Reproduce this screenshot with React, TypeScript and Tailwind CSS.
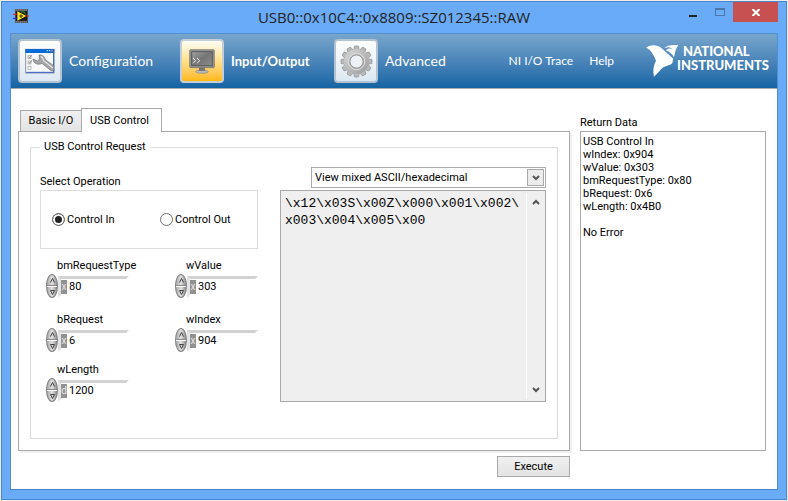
import { useState } from "react"
import type { ReactNode } from "react"

function AppIcon() {
  return (
    <svg width="16" height="14" viewBox="0 0 48 42" aria-hidden="true">
      <rect x="6" y="0" width="39" height="42" fill="#4a4a4a" />
      <path d="M8 3h35M8 39h35" stroke="#c9c9c9" strokeWidth="3" strokeDasharray="3 3" />
      <rect x="9" y="7" width="33" height="28" fill="#161616" />
      <path d="M13 7v28L40 21z" fill="#ffe81a" />
      <path d="M24 16v11M19 21h11" stroke="#222" strokeWidth="3" />
      <path d="M24 9h9l6 8" stroke="#159a2b" strokeWidth="3" fill="none" />
      <path d="M0 16h13M36 21h12" stroke="#f01818" strokeWidth="3" />
      <path d="M0 28h13" stroke="#2020e8" strokeWidth="3" />
    </svg>
  )
}

function ConfigIcon() {
  return (
    <svg width="30" height="26" viewBox="0 0 90 78" aria-hidden="true">
      <rect x="2" y="4" width="85" height="71" fill="#f7f9fb" stroke="#8b96a8" strokeWidth="3" />
      <path d="M1 3h87v12H1z" fill="#0a6bd6" />
      <path d="M65 8h4M72 8h4" stroke="#b9dcff" strokeWidth="4" />
      <path d="M79 8h5" stroke="#f07050" strokeWidth="5" />
      <path d="M86 15v58H4" stroke="#2f5bc4" strokeWidth="3" fill="none" />
      <g fill="#fff" stroke="#9a9a9a" strokeWidth="2">
        <rect x="9" y="23" width="9" height="9" />
        <rect x="9" y="39" width="9" height="9" />
        <rect x="9" y="55" width="9" height="9" />
      </g>
      <path d="M11 26l3 4 6-9M11 42l3 4 6-9" stroke="#666" strokeWidth="2" fill="none" />
      <path
        d="M24 33l13 6 7-6-2-12c10-1 18 5 19 14l25 18v16l-8-1-27-22c-12 6-26 1-27-13z"
        fill="#a6a6a6"
        stroke="#6d6d6d"
        strokeWidth="2"
      />
      <path d="M47 25c7 2 8 8 9 13l28 22" stroke="#e2e2e2" strokeWidth="4" fill="none" />
    </svg>
  )
}

function MonitorIcon() {
  return (
    <svg width="26" height="25" viewBox="0 0 78 75" aria-hidden="true">
      <defs>
        <linearGradient id="screen" x1="0" y1="0" x2="1" y2="1">
          <stop offset="0" stopColor="#a3a3a3" />
          <stop offset="0.5" stopColor="#747474" />
          <stop offset="1" stopColor="#8d8d8d" />
        </linearGradient>
      </defs>
      <ellipse cx="39" cy="68" rx="19" ry="5" fill="#b9b9b9" stroke="#888" strokeWidth="2" />
      <path d="M31 54h16l2 12H29z" fill="#777" />
      <rect x="2" y="2" width="74" height="54" rx="3" fill="#969696" stroke="#6a6a6a" strokeWidth="2" />
      <rect x="8" y="8" width="62" height="42" fill="url(#screen)" stroke="#5a5a5a" strokeWidth="3" />
      <path d="M12 27l8 8-8 8M24 27l8 8-8 8" stroke="#f2f2f2" strokeWidth="3" fill="none" />
      <circle cx="61" cy="52" r="2" fill="#38c938" />
    </svg>
  )
}

const teeth = [0, 30, 60, 90, 120, 150, 180, 210, 240, 270, 300, 330]

function GearIcon() {
  return (
    <svg width="33" height="33" viewBox="-50 -50 100 100" aria-hidden="true">
      <defs>
        <linearGradient id="gear" x1="0" y1="0" x2="1" y2="1">
          <stop offset="0" stopColor="#d2d2d2" />
          <stop offset="1" stopColor="#a3a3a3" />
        </linearGradient>
      </defs>
      {teeth.map((angle) => (
        <path
          key={angle}
          d="M-9 -32L-6 -47H6L9 -32z"
          transform={`rotate(${angle})`}
          fill="#b9b9b9"
          stroke="#8f8f8f"
          strokeWidth="2"
        />
      ))}
      <circle r="29" fill="none" stroke="url(#gear)" strokeWidth="17" />
      <circle r="20" fill="#eef2f6" stroke="#8d8d8d" strokeWidth="3" />
      <circle r="25" fill="none" stroke="#dedede" strokeWidth="3" />
    </svg>
  )
}

function EagleLogo() {
  return (
    <svg width="33" height="34" viewBox="0 0 99 102" fill="#fff" aria-hidden="true">
      <path d="M0 11C14 1 34 1 46 12L82 44L79 57C74 64 62 64 52 70C42 78 36 88 24 98C20 82 22 64 30 50C22 30 14 16 0 11z" />
      <path d="M55 13C62 4 74 2 97 3C89 12 88 24 84 40C79 30 71 24 60 19C66 13 72 12 79 15C72 8 64 9 55 13z" />
    </svg>
  )
}

interface NavItemProps {
  label: string
  icon: ReactNode
  active?: boolean
  onClick: () => void
}

function NavItem({ label, icon, active, onClick }: NavItemProps) {
  return (
    <button type="button" onClick={onClick} className="flex items-center gap-[7px] text-white">
      <span
        className={
          active
            ? "flex size-11 items-center justify-center rounded border-2 border-[#c5ced6] bg-linear-to-b from-[#fffdf5] via-[#ffe08a] to-[#ffb800]"
            : "flex size-11 items-center justify-center rounded border-2 border-[#b4c3d2] bg-linear-to-b from-white to-[#dce8f3]"
        }
      >
        {icon}
      </span>
      <span className={active ? "text-[13px] font-bold" : "text-sm"}>{label}</span>
    </button>
  )
}

interface NumericProps {
  id: string
  radix: "x" | "d"
  initial: string
}

function NumericControl({ id, radix, initial }: NumericProps) {
  const [value, setValue] = useState(initial)
  const base = radix === "x" ? 16 : 10

  const step = (delta: number) => {
    const next = Math.max(0, (parseInt(value, base) || 0) + delta)
    setValue(next.toString(base).toUpperCase())
  }

  return (
    <div>
      <label htmlFor={id} className="block pl-[11px]">
        {id}
      </label>
      <div className="flex h-[26px] items-start">
        <div className="flex h-6 w-3 flex-col overflow-hidden rounded-[50%] border border-[#7f7f7f] bg-linear-to-r from-[#a8a8a8] via-[#e2e2e2] to-[#8c8c8c]">
          <button type="button" aria-label={`Increase ${id}`} onClick={() => step(1)} className="flex flex-1 items-center justify-center border-b border-[#8b8b8b]">
            <svg width="5" height="5" viewBox="0 0 5 5"><path d="M0.5 4.5L2.5 0.5L4.5 4.5" fill="none" stroke="#444" /></svg>
          </button>
          <button type="button" aria-label={`Decrease ${id}`} onClick={() => step(-1)} className="flex flex-1 items-center justify-center border-t border-white">
            <svg width="5" height="5" viewBox="0 0 5 5"><path d="M0.5 0.5L2.5 4.5L4.5 0.5z" fill="none" stroke="#444" /></svg>
          </button>
        </div>
        <div className="mt-0.5 flex h-[22px] w-[71px] items-center border-3 border-t-[#d2d2d2] border-r-transparent border-b-transparent border-l-[#e3e3e3]">
          <span className="flex h-3.5 w-1.5 shrink-0 items-center justify-center bg-[#919191] text-[10px] text-[#e8e8e8]">{radix}</span>
          <input
            id={id}
            value={value}
            onChange={(e) => setValue(e.target.value)}
            className="w-full min-w-0 bg-transparent pl-0.5 outline-none"
          />
        </div>
      </div>
    </div>
  )
}

function Chevron({ down }: { down?: boolean }) {
  return (
    <svg width="8" height="6" viewBox="0 0 8 6" aria-hidden="true">
      <path d={down ? "M1 1L4 4L7 1" : "M1 5L4 2L7 5"} fill="none" stroke="#555" strokeWidth="2" />
    </svg>
  )
}

const returnData = `USB Control In
wIndex: 0x904
wValue: 0x303
bmRequestType: 0x80
bRequest: 0x6
wLength: 0x4B0

No Error`

const buffer = "\\x12\\x03S\\x00Z\\x000\\x001\\x002\\\nx003\\x004\\x005\\x00"

export default function App() {
  const [page, setPage] = useState("io")
  const [tab, setTab] = useState("control")
  const [operation, setOperation] = useState("in")

  return (
    <div className="flex min-h-screen bg-[#ececec] p-px font-[Roboto,sans-serif] text-[11px] leading-4 text-black">
      <div className="flex flex-1 flex-col border border-[#4a86cb] bg-[#6aabf8] px-2 pb-[9px]">
        <header className="grid h-[31px] grid-cols-[1fr_auto_1fr] items-start">
          <div className="pt-[7px] pl-[3px]">
            <AppIcon />
          </div>
          <h1 className="pt-[3px] font-['Open_Sans',sans-serif] text-[15px] leading-6 text-[#222]">
            USB0::0x10C4::0x8809::SZ012345::RAW
          </h1>
          <div className="flex justify-end">
            <button type="button" aria-label="Minimize" className="flex h-5 w-[26px] items-center justify-center pt-2">
              <span className="h-0.5 w-2 bg-[#222]" />
            </button>
            <button type="button" aria-label="Maximize" className="flex h-5 w-[27px] items-center justify-center">
              <span className="h-2 w-2.5 border border-t-2 border-[#4d76a8]" />
            </button>
            <button type="button" aria-label="Close" className="flex h-5 w-[45px] items-center justify-center bg-[#c75050]">
              <svg width="8" height="7" viewBox="0 0 8 7"><path d="M0.5 0L7.5 7M7.5 0L0.5 7" stroke="#fff" strokeWidth="2" /></svg>
            </button>
          </div>
        </header>

        <div className="flex flex-1 flex-col border border-[#4f8fd2] border-b-[#4a86cb] bg-white">
          <nav className="flex h-[55px] shrink-0 items-center justify-between border-b border-[#a9a9a9] bg-linear-to-b from-[#78a6cc] to-[#1164a5] pr-2 pl-[7px] font-[Lato,sans-serif] text-white">
            <div className="grid grid-cols-[162px_154px_auto]">
              <NavItem label="Configuration" icon={<ConfigIcon />} active={page === "config"} onClick={() => setPage("config")} />
              <NavItem label="Input/Output" icon={<MonitorIcon />} active={page === "io"} onClick={() => setPage("io")} />
              <NavItem label="Advanced" icon={<GearIcon />} active={page === "advanced"} onClick={() => setPage("advanced")} />
            </div>
            <div className="flex items-center text-xs">
              <a href="#trace" className="mr-4">NI I/O Trace</a>
              <a href="#help" className="mr-8">Help</a>
              <div className="flex">
                <EagleLogo />
                <div className="-ml-0.5 text-[13px] leading-[14px] font-black">
                  <p className="pl-1.5">NATIONAL</p>
                  <p>INSTRUMENTS</p>
                </div>
              </div>
            </div>
          </nav>

          <main className="grid flex-1 grid-cols-[1fr_186px] grid-rows-[auto_1fr_auto] gap-x-2.5 pt-[19px] pr-[11px] pb-3 pl-[7px]">
            <div role="tablist" className="relative z-10 -mb-px flex items-end pl-0.5">
              <button
                type="button"
                role="tab"
                aria-selected={tab === "basic"}
                onClick={() => setTab("basic")}
                className={
                  tab === "basic"
                    ? "h-6 w-[61px] border border-b-0 border-[#a9a9a9] bg-white"
                    : "mb-px h-[21px] w-[61px] border border-r-0 border-b-0 border-[#a9a9a9] bg-linear-to-b from-[#f0f0f0] to-[#e4e4e4]"
                }
              >
                Basic I/O
              </button>
              <button
                type="button"
                role="tab"
                aria-selected={tab === "control"}
                onClick={() => setTab("control")}
                className={
                  tab === "control"
                    ? "h-6 w-[81px] border border-b-0 border-[#a9a9a9] bg-white pr-1"
                    : "mb-px h-[21px] w-[81px] border border-b-0 border-[#a9a9a9] bg-linear-to-b from-[#f0f0f0] to-[#e4e4e4]"
                }
              >
                USB Control
              </button>
            </div>
            <label htmlFor="return-data" className="self-end">
              Return Data
            </label>

            <section className="flex border border-[#a9a9a9] px-[11px] pt-[7px] pb-[11px] shadow-[2px_2px_0_#f0f0f0]">
              <fieldset className="min-w-0 flex-1 border border-[#dcdcdc] pr-[11px] pl-[9px]">
                <legend className="px-1">USB Control Request</legend>
                <div className="flex gap-[22px] pt-3">
                  <div className="w-[218px] shrink-0 pt-[7px]">
                    <p id="operation">Select Operation</p>
                    <div role="radiogroup" aria-labelledby="operation" className="grid h-[59px] grid-cols-[108px_auto] items-center border border-[#dcdcdc] pl-[11px]">
                      {["in", "out"].map((value) => (
                        <label key={value} className="flex items-center gap-0.5">
                          <input
                            type="radio"
                            name="operation"
                            value={value}
                            checked={operation === value}
                            onChange={() => setOperation(value)}
                            className="size-[13px] appearance-none rounded-full border border-[#707070] bg-white checked:bg-[#222] checked:shadow-[inset_0_0_0_2px_#fff]"
                          />
                          {value === "in" ? "Control In" : "Control Out"}
                        </label>
                      ))}
                    </div>
                    <div className="mt-[9px] pl-1.5">
                      <div className="grid grid-cols-[129px_auto] gap-y-3">
                        <NumericControl id="bmRequestType" radix="x" initial="80" />
                        <NumericControl id="wValue" radix="x" initial="303" />
                        <NumericControl id="bRequest" radix="x" initial="6" />
                        <NumericControl id="wIndex" radix="x" initial="904" />
                      </div>
                      <div className="mt-2">
                        <NumericControl id="wLength" radix="d" initial="1200" />
                      </div>
                    </div>
                  </div>

                  <div className="flex min-w-0 flex-1 flex-col items-end gap-0.5">
                    <div className="relative w-[235px]">
                      <select aria-label="View" className="block h-[21px] w-full appearance-none border border-[#a9a9a9] bg-white px-[3px] outline-none">
                        <option>View mixed ASCII/hexadecimal</option>
                        <option>View ASCII only</option>
                        <option>View hexadecimal only</option>
                      </select>
                      <span className="pointer-events-none absolute inset-y-0.5 right-0.5 flex w-[17px] items-center justify-center border border-[#a9a9a9] bg-[#ececec]">
                        <Chevron down />
                      </span>
                    </div>
                    <div className="flex h-[212px] w-full border border-[#a9a9a9] bg-[#efefef]">
                      <textarea
                        aria-label="Buffer"
                        readOnly
                        value={buffer}
                        className="min-w-0 flex-1 resize-none overflow-hidden py-1 pl-1 font-['Liberation_Mono',monospace] text-[13px] leading-[17px] outline-none"
                      />
                      <div className="my-0.5 flex w-[19px] flex-col items-center justify-between border-l border-white py-1.5">
                        <button type="button" aria-label="Scroll up"><Chevron /></button>
                        <button type="button" aria-label="Scroll down"><Chevron down /></button>
                      </div>
                    </div>
                  </div>
                </div>
              </fieldset>
            </section>
            <textarea
              id="return-data"
              readOnly
              value={returnData}
              className="resize-none border border-[#a9a9a9] px-0.5 py-[3px] leading-[13px] outline-none"
            />

            <button type="button" className="mt-[5px] h-[21px] w-[73px] justify-self-end border border-[#a9a9a9] bg-linear-to-b from-[#f0f0f0] to-[#e3e3e3]">
              Execute
            </button>
          </main>
        </div>
      </div>
    </div>
  )
}
